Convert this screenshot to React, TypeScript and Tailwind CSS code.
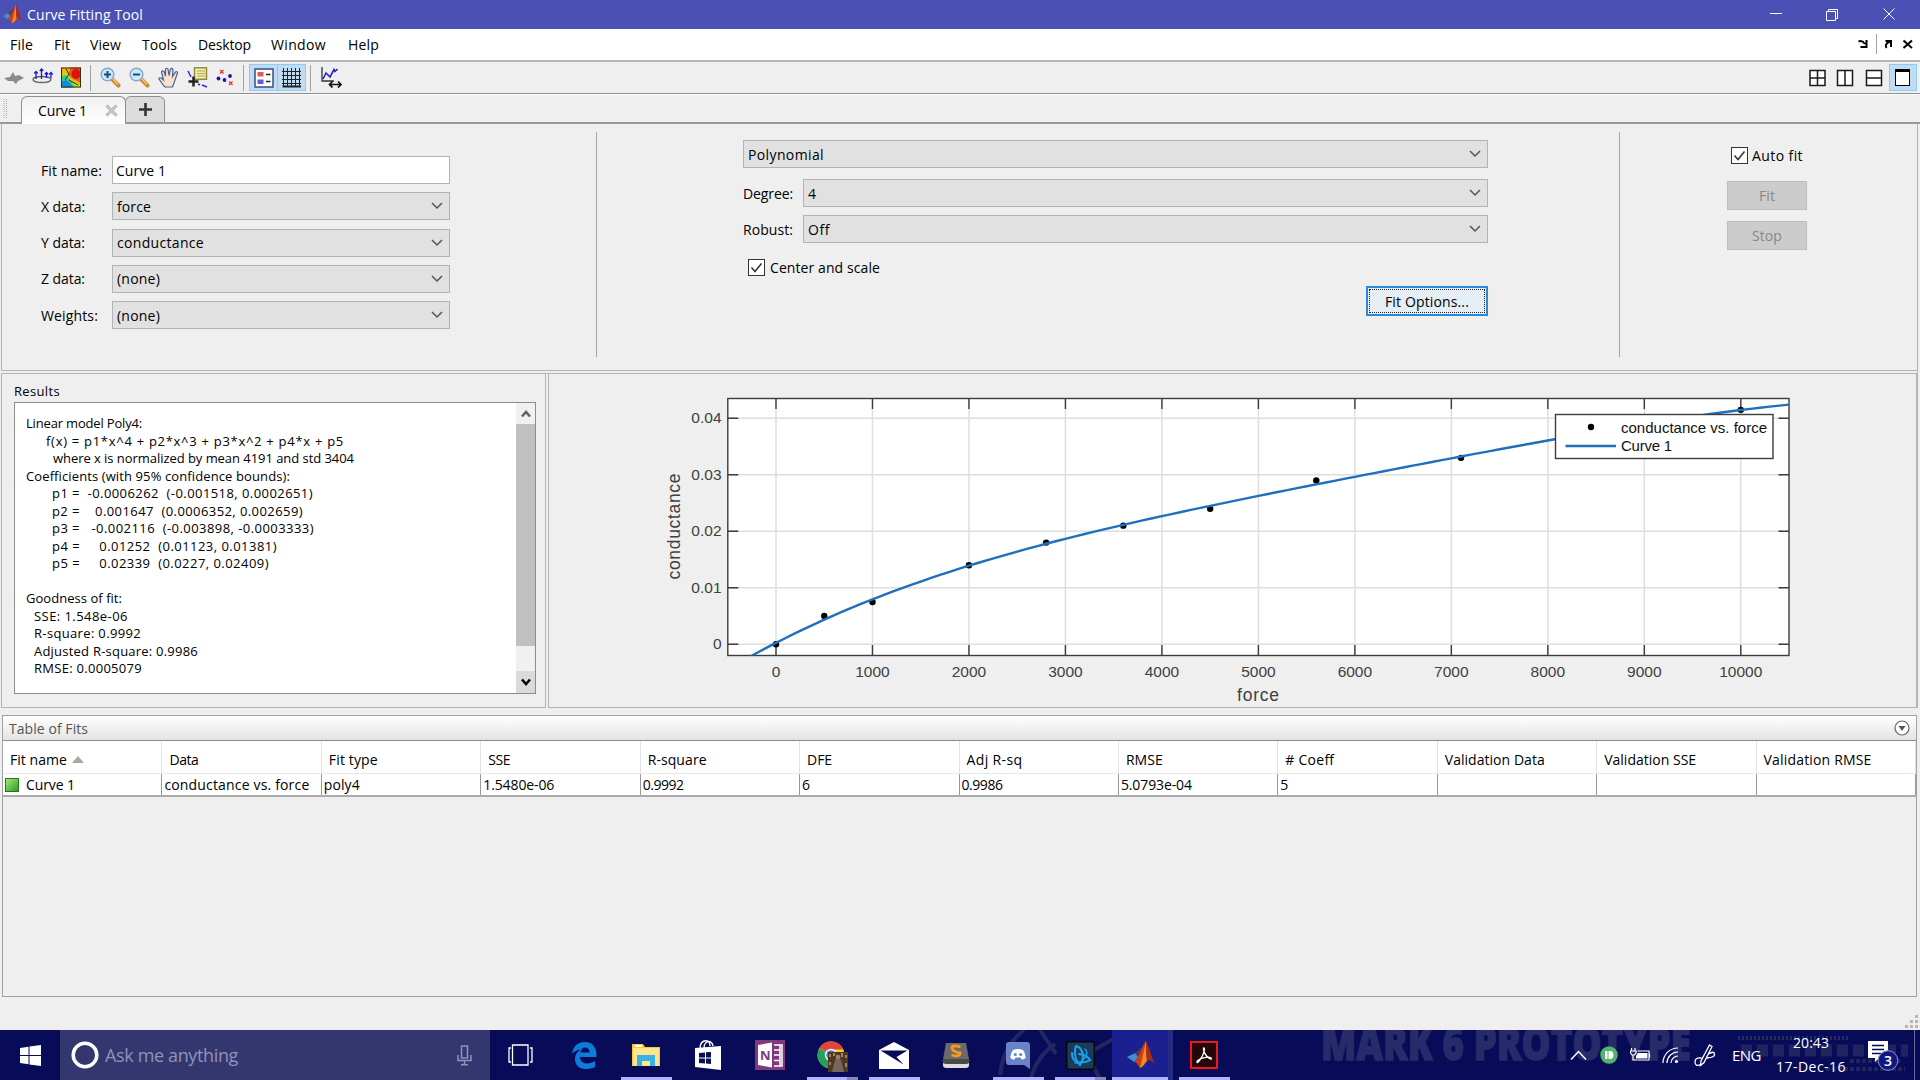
import React, { useLayoutEffect, useRef } from "react";

/* Text run whose tracking is adjusted so that it spans w pixels. */
function T({ w, className = "", children }: { w?: number; className?: string; children: string }) {
  const ref = useRef<HTMLSpanElement>(null);
  useLayoutEffect(() => {
    const el = ref.current;
    if (!el || !w) return;
    el.style.letterSpacing = "0px";
    const natural = el.getBoundingClientRect().width;
    el.style.letterSpacing = `${(w - natural) / children.length}px`;
  }, [w, children]);
  return (
    <span ref={ref} className={`inline-block whitespace-pre ${className}`}>
      {children}
    </span>
  );
}

function MatlabLogo({ size }: { size: number }) {
  return (
    <svg width={size} height={size} viewBox="0 0 30 30">
      <path d="M1 17 L9 13 L13 17 L8 22 Z" fill="#3f8fc9" />
      <path d="M9 13 L14 9 L20 2 L13 18 L8 22 L12 17 Z" fill="#5a3a4a" />
      <path d="M20 1 C17 4 16 11 12 17 C10 20 9 21 8 22 C11 22 12 25 14 28 C18 27 19 22 22 20 Z" fill="#c8421b" />
      <path d="M20 1 C18 10 16 20 14 28 C17 27 19 23 21 21 C20 12 20 8 20 1 Z" fill="#f08a2c" />
      <path d="M20 1 C23 6 25 16 29 24 C26 21 24 19 21 21 C20 14 20 8 20 1 Z" fill="#a82c14" />
    </svg>
  );
}

const MENUS: [string, number, string][] = [
  ["File", 23, "ml-[10px]"],
  ["Fit", 16, "ml-[21px]"],
  ["View", 31, "ml-[20px]"],
  ["Tools", 35, "ml-[21px]"],
  ["Desktop", 53, "ml-[21px]"],
  ["Window", 55, "ml-[20px]"],
  ["Help", 31, "ml-[22px]"],
];

function TitleBar() {
  return (
    <div className="flex h-[29px] items-center bg-[#4a50b4] pl-[2px] text-white">
      <MatlabLogo size={21} />
      <T w={116} className="ml-[4px] text-[14px]">Curve Fitting Tool</T>
      <svg className="mr-[25px] ml-auto" width="125" height="13" viewBox="0 0 125 13" fill="none" stroke="#fff" strokeWidth="1">
        <path d="M0 5.500H12" />
        <path d="M56.500 3.500h9v9h-9zM58.500 3.500v-2h9v9h-2" />
        <path d="M113.500 0.500L124.500 11.500M124.500 0.500L113.500 11.500" />
      </svg>
    </div>
  );
}

function MenuBar() {
  return (
    <div className="flex h-[33px] items-center border-b-2 border-[#b4b4b4] bg-white text-[14px]">
      {MENUS.map(([t, w, m]) => (
        <T key={t} w={w} className={m}>{t}</T>
      ))}
      <svg className="mr-[6px] ml-auto" width="56" height="22" viewBox="0 0 56 22" fill="none" stroke="#000" strokeWidth="2">
        <path d="M0.500 7.500Q4 6 7 10M8.500 6V13H2.500" />
        <path d="M18.500 0V20" stroke="#a0a0a0" strokeWidth="1" />
        <path d="M28.500 14Q26 10 32 7.500M27.500 7H33V13" />
        <path d="M45.500 6.500L54 14M54 6.500L45.500 14" />
      </svg>
    </div>
  );
}

function Sep() {
  return <div className="h-[26px] w-px bg-[#a0a0a0]" />;
}

function Magnifier({ plus }: { plus: boolean }) {
  return (
    <svg width="21" height="21" viewBox="0 0 21 21">
      <path d="M12 12L18.500 18.500" stroke="#c98a2e" strokeWidth="4" strokeLinecap="round" />
      <path d="M12.500 11.500L18 17.500" stroke="#f5c66a" strokeWidth="1.500" />
      <circle cx="7.500" cy="7.500" r="6.300" fill="#c9eaf8" stroke="#8da6cf" strokeWidth="1.500" />
      <path d={plus ? "M4 7.500h7M7.500 4v7" : "M4 7.500h7"} stroke="#1c4a80" strokeWidth="2" />
    </svg>
  );
}

function Toolbar() {
  return (
    <div className="flex h-[32px] items-center border-b border-[#8c8c8c]">
      <svg className="ml-[4px]" width="20" height="21" viewBox="0 0 20 21">
        <path d="M0 11L6 10L9 5L11 9L15 8L20 11L14 14L12 17L9 14L4 14Z" fill="#8a8a8a" />
      </svg>
      <svg className="ml-[8px]" width="21" height="21" viewBox="0 0 21 21" fill="none">
        <ellipse cx="10" cy="12.500" rx="9" ry="3" stroke="#666" strokeWidth="1.300" />
        <path d="M4 12V5M9.500 12V3M14.500 11V6M19 11V6" stroke="#1717d8" strokeWidth="1.300" />
        <path d="M2.300 6.500L4 4.500L5.700 6.500M7.800 4L9.500 2L11.200 4M12.800 7.500l1.700-2l1.700 2M17.300 7.500l1.700-2l1.700 2" stroke="#1717d8" strokeWidth="1.300" />
      </svg>
      <svg className="ml-[8px]" width="20" height="21" viewBox="0 0 20 21">
        <rect width="20" height="20" y=".5" fill="#fbb11a" />
        <path d="M9 1Q9 5 6 8L12 12L20 16V.5H10Z" fill="#ef5a12" />
        <ellipse cx="15" cy="7" rx="4.500" ry="5" fill="#e01111" />
        <path d="M0 9Q4 3 7 7L12 14L20 18V20.500H0Z" fill="#b5e02a" />
        <path d="M0 11Q4 5 8 11L14 20.500H0Z" fill="#35c98a" />
        <path d="M0 16Q5 9 12 20.500H0Z" fill="#1986dc" />
        <path d="M5 2L8 7L4 13M8 13L17 18" fill="none" stroke="#3b2b12" />
        <rect x=".5" y="1" width="19" height="19" fill="none" stroke="#3a2a10" />
      </svg>
      <div className="ml-[9px]"><Sep /></div>
      <div className="ml-[9px] flex gap-[8px]">
        <Magnifier plus />
        <Magnifier plus={false} />
        <svg width="21" height="21" viewBox="0 0 21 21">
          <path d="M6 19L1 12Q1 10 4 11.500L5.500 13L3.500 5Q4 3 6 4.500L7.500 9L7.500 2Q9 .5 10 2L11 8.500L12.500 2Q14 .5 15 2.500L14.500 9.500L17.500 5Q19.500 4 19.500 6L16 16L14.500 20H7Z" fill="#fbe0cd" stroke="#46648f" strokeWidth="1.200" />
        </svg>
        <svg width="21" height="21" viewBox="0 0 21 21" fill="none">
          <path d="M1 4L4 10M11 17L13 18M15 18L20 20" stroke="#2a2af0" strokeWidth="1.500" />
          <rect x="7.500" y=".8" width="12" height="11.500" fill="#f5f0a0" stroke="#8d8a4a" strokeWidth="1.500" />
          <path d="M10 4h8M10 6.500h8M10 9h8" stroke="#a9a564" />
          <path d="M1.500 14.500h10M6.500 9.500v10" stroke="#222" strokeWidth="2.500" />
        </svg>
        <svg width="21" height="21" viewBox="0 0 21 21" fill="none">
          <g fill="#1616b4"><circle cx="2.500" cy="11.500" r="1.900" /><circle cx="8.500" cy="13" r="1.900" /><circle cx="14" cy="9" r="1.900" /></g>
          <path d="M4 3l3.500 3.500M7.500 3L4 6.500M13 14.500l3.500 3.500M16.500 14.500L13 18" stroke="#e33" strokeWidth="1.300" />
        </svg>
      </div>
      <div className="ml-[6px]"><Sep /></div>
      <div className="ml-[5px] flex">
        <div className="flex h-[27px] w-[29px] items-center justify-center border border-[#90c8f6] bg-[#c0dcf3]">
          <svg width="20" height="20" viewBox="0 0 20 20" fill="none">
            <rect x="1" y="1" width="18" height="18" fill="#fff" stroke="#3c4c7c" strokeWidth="1.500" />
            <rect x="3.500" y="4" width="6" height="4.500" fill="#e2575a" />
            <rect x="3.500" y="11.500" width="6" height="4.500" fill="#5b5be0" />
            <path d="M12 6.500h4.500M12 13.500h4.500" stroke="#222" strokeWidth="1.500" />
          </svg>
        </div>
        <div className="flex h-[27px] w-[28px] items-center justify-center border border-l-0 border-[#90c8f6] bg-[#c0dcf3]">
          <svg width="20" height="20" viewBox="0 0 20 20" fill="none" stroke="#222">
            <path d="M1.500 0V19M5.500 0V19M9.500 0V19M13.500 0V19M17.500 0V19M0 3.500H19M0 7.500H19M0 11.500H19M0 15.500H19" />
            <path d="M0.500 18.500H19" strokeWidth="2" />
          </svg>
        </div>
      </div>
      <div className="ml-[4px]"><Sep /></div>
      <svg className="ml-[10px]" width="21" height="21" viewBox="0 0 21 21" fill="none">
        <path d="M1 0V14H13" stroke="#333" strokeWidth="1.300" />
        <path d="M2 12L5 6L9 10L13 2.500L14 4.500L16.500 2" stroke="#2222c8" strokeWidth="1.600" />
        <path d="M9 17.500h10M11.500 14.500L8.500 17.500L11.500 20.500M17 14.500L20 17.500L17 20.500" stroke="#111" strokeWidth="1.700" />
      </svg>
      <svg className="mr-[6px] ml-auto" width="74" height="18" viewBox="0 0 74 18" fill="#fff" stroke="#1a1a1a" strokeWidth="1.500">
        <path d="M1 1.500h15v15H1zM8.500 1.500v15M1 9h15" />
        <path d="M28.500 1.500h15v15h-15zM36 1.500v15" />
        <path d="M57.500 1.500h15v15h-15zM57.500 9h15" />
      </svg>
      <div className="mr-[3px] flex h-[27px] w-[28px] items-center justify-center border border-[#90c8f6] bg-[#c0dcf3]">
        <div className="mr-px h-[17px] w-[15px] border border-t-[3px] border-black bg-white" />
      </div>
    </div>
  );
}

function Tabs() {
  return (
    <div className="flex h-[30px] items-end border-t border-b-2 border-t-white border-b-[#989898]">
      <svg className="mb-[4px] ml-[3px]" width="5" height="19" viewBox="0 0 5 19">
        <path d="M1 0V19M3.500 0V19" stroke="#a8a8a8" strokeDasharray="1 1" />
      </svg>
      <div className="-mb-[2px] ml-[13px] flex h-[28px] w-[105px] items-center rounded-t-[6px] border border-b-0 border-[#909090] bg-gradient-to-b from-[#f0f0f0] to-white pb-px">
        <T w={49} className="ml-[16px] text-[14px]">Curve 1</T>
        <svg className="ml-[18px]" width="13" height="13" viewBox="0 0 13 13" fill="none">
          <path d="M1.500 1.500L11.500 11.500M11.500 1.500L1.500 11.500" stroke="#b4b4b4" strokeWidth="3" />
          <path d="M2.500 2.500L10.500 10.500M10.500 2.500L2.500 10.500" stroke="#d8d8d8" strokeWidth="1" />
        </svg>
      </div>
      <div className="-ml-px flex h-[26px] w-[40px] items-center justify-center rounded-t-[6px] border border-b-0 border-[#909090] bg-[#dcdcdc]">
        <svg width="13" height="13" viewBox="0 0 13 13"><path d="M0 6.500h13M6.500 0v13" stroke="#333" strokeWidth="2.600" /></svg>
      </div>
    </div>
  );
}

function Combo({ value, vw, className = "" }: { value: string; vw: number; className?: string }) {
  return (
    <div className={`flex h-[28px] items-center border border-[#b2b3b8] bg-[#e1e1e1] pr-[6px] pl-[4px] ${className}`}>
      <T w={vw}>{value}</T>
      <svg className="ml-auto" width="12" height="8" viewBox="0 0 12 8" fill="none" stroke="#555" strokeWidth="1.500"><path d="M1 1L6 6L11 1" /></svg>
    </div>
  );
}

function Check() {
  return (
    <div className="flex h-[17px] w-[17px] items-center justify-center border border-[#333] bg-white">
      <svg width="13" height="13" viewBox="0 0 13 13" fill="none" stroke="#333" strokeWidth="1.500"><path d="M1.500 6.500L5 10.500L11.500 2.500" /></svg>
    </div>
  );
}

const FIELDS: [string, number, string, number][] = [
  ["X data:", 44, "force", 34],
  ["Y data:", 44, "conductance", 87],
  ["Z data:", 44, "(none)", 43],
  ["Weights:", 57, "(none)", 43],
];

function SettingsPanel() {
  return (
    <div className="flex h-[247px] border-b border-l border-[#b4b4b4] pt-[8px] text-[14px]">
      <div className="mt-[24px] flex w-[594px] flex-col gap-[8.300px] pl-[39px]">
        <div className="flex items-center">
          <div className="w-[71px]"><T w={61}>Fit name:</T></div>
          <div className="flex h-[28px] w-[338px] items-center border border-[#b2b3b8] bg-white pl-[3px]"><T w={50}>Curve 1</T></div>
        </div>
        {FIELDS.map(([l, lw, v, vw]) => (
          <div key={l} className="flex items-center">
            <div className="w-[71px]"><T w={lw}>{l}</T></div>
            <Combo value={v} vw={vw} className="w-[338px]" />
          </div>
        ))}
      </div>
      <div className="h-[225px] w-px bg-[#a6a6a6]" />
      <div className="ml-[146px] w-[745px] pt-[8px]">
        <Combo value="Polynomial" vw={76} />
        <div className="mt-[11px] flex items-center"><div className="w-[60px]"><T w={50}>Degree:</T></div><Combo value="4" vw={8} className="flex-1" /></div>
        <div className="mt-[8px] flex items-center"><div className="w-[60px]"><T w={50}>Robust:</T></div><Combo value="Off" vw={22} className="flex-1" /></div>
        <div className="mt-[14px] ml-[5px] flex items-center gap-[5px]"><Check /><T w={110}>Center and scale</T></div>
        <div className="mt-[8px] ml-auto h-[30px] w-[122px] border-2 border-[#2a8ad8] bg-[#e5edf5] p-px">
          <div className="flex h-full items-center justify-center border border-dotted border-[#222]"><T w={84}>Fit Options...</T></div>
        </div>
      </div>
      <div className="ml-[131px] h-[225px] w-px bg-[#a6a6a6]" />
      <div className="ml-[107px] pt-[13px]">
        <div className="ml-[4px] flex items-center gap-[4px]"><Check /><T w={51}>Auto fit</T></div>
        <div className="mt-[15px] flex h-[29px] w-[80px] items-center justify-center border border-[#bfbfbf] bg-[#cccccc] text-[#888]"><T w={16}>Fit</T></div>
        <div className="mt-[11px] flex h-[29px] w-[80px] items-center justify-center border border-[#bfbfbf] bg-[#cccccc] text-[#888]"><T w={30}>Stop</T></div>
      </div>
    </div>
  );
}

/* text, indent in px, width in px */
const RESULTS: [string, number, number][] = [
  ["Linear model Poly4:", 0, 116],
  ["f(x) = p1*x^4 + p2*x^3 + p3*x^2 + p4*x + p5", 20, 298],
  ["where x is normalized by mean 4191 and std 3404", 27, 301],
  ["Coefficients (with 95% confidence bounds):", 0, 264],
  ["p1 =  -0.0006262  (-0.001518, 0.0002651)", 26, 261],
  ["p2 =    0.001647  (0.0006352, 0.002659)", 26, 251],
  ["p3 =   -0.002116  (-0.003898, -0.0003333)", 26, 262],
  ["p4 =     0.01252  (0.01123, 0.01381)", 26, 225],
  ["p5 =     0.02339  (0.0227, 0.02409)", 26, 217],
  [" ", 0, 4],
  ["Goodness of fit:", 0, 96],
  ["SSE: 1.548e-06", 8, 94],
  ["R-square: 0.9992", 8, 107],
  ["Adjusted R-square: 0.9986", 8, 164],
  ["RMSE: 0.0005079", 8, 108],
];

function Results() {
  return (
    <div className="h-full w-[545px] border-r border-b border-l border-[#b4b4b4] pt-[8px] pl-[12px]">
      <div className="flex h-[20px] items-center text-[13px]"><T w={46}>Results</T></div>
      <div className="flex h-[292px] w-[522px] border border-[#8a8c90] bg-white">
        <div className="flex-1 pt-[12px] pl-[11px] text-[13px] leading-[17.500px] text-black">
          {RESULTS.map(([t, indent, w], i) => (
            <div key={i} className="h-[17.500px]" style={{ paddingLeft: indent }}><T w={w}>{t}</T></div>
          ))}
        </div>
        <div className="flex w-[19px] flex-col bg-[#f0f0f0]">
          <div className="flex h-[21px] items-center justify-center">
            <svg width="10" height="8" viewBox="0 0 10 8" fill="none" stroke="#606060" strokeWidth="2.500"><path d="M1 6.500L5 2L9 6.500" /></svg>
          </div>
          <div className="h-[222px] bg-[#c0c0c0]" />
          <div className="mt-auto flex h-[22px] items-center justify-center bg-[#dadada]">
            <svg width="10" height="8" viewBox="0 0 10 8" fill="none" stroke="#000" strokeWidth="2.500"><path d="M1 1.500L5 6L9 1.500" /></svg>
          </div>
        </div>
      </div>
    </div>
  );
}

/* Plot geometry, in pixels inside the chart panel. */
const px = (x: number) => 227 + (x / 1000) * 96.48;
const py = (y: number) => 270.3 - (y / 0.01) * 56.5;
const model = (x: number) => {
  const z = (x - 4191) / 3404;
  return -0.0006262 * z ** 4 + 0.001647 * z ** 3 - 0.002116 * z ** 2 + 0.01252 * z + 0.02339;
};
const CURVE = Array.from({ length: 111 }, (_, i) => -500 + i * 100)
  .map((x, i) => `${i ? "L" : "M"}${px(x).toFixed(2)} ${py(model(x)).toFixed(2)}`)
  .join("");
const POINTS: [number, number][] = [
  [0, 0], [500, 0.005], [1000, 0.0075], [2000, 0.014], [2800, 0.018], [3600, 0.021],
  [4500, 0.024], [5600, 0.029], [7100, 0.033], [10000, 0.0415],
];
const XT = [0, 1000, 2000, 3000, 4000, 5000, 6000, 7000, 8000, 9000, 10000];
const YT = [0, 0.01, 0.02, 0.03, 0.04];

function Chart() {
  const L = 178.8, R = 1240, TP = 24.5, B = 281.5;
  return (
    <div className="h-full flex-1 border-r border-b border-l border-[#b4b4b4]">
      <svg width="1366" height="332" viewBox="0 0 1366 332" fontFamily="'Liberation Sans', Arial, sans-serif">
        <defs><clipPath id="axes"><rect x={L} y={TP} width={R - L} height={B - TP} /></clipPath></defs>
        <rect x={L} y={TP} width={R - L} height={B - TP} fill="#fff" />
        {XT.map((x) => <path key={x} d={`M${px(x)} ${TP}V${B}`} stroke="#dedede" strokeWidth="1.500" />)}
        {YT.map((y) => <path key={y} d={`M${L} ${py(y)}H${R}`} stroke="#dedede" strokeWidth="1.500" />)}
        {XT.map((x) => <path key={x} d={`M${px(x)} ${TP}v10.500M${px(x)} ${B}v-10.500`} stroke="#3c3c3c" strokeWidth="1.400" />)}
        {YT.map((y) => <path key={y} d={`M${L} ${py(y)}h10.500M${R} ${py(y)}h-10.500`} stroke="#3c3c3c" strokeWidth="1.400" />)}
        <rect x={L} y={TP} width={R - L} height={B - TP} fill="none" stroke="#3c3c3c" strokeWidth="1.400" />
        {POINTS.map(([x, y]) => <circle key={x} cx={px(x)} cy={py(y)} r="3.200" fill="#000" />)}
        <path d={CURVE} fill="none" stroke="#1f6fbd" strokeWidth="2.400" clipPath="url(#axes)" />
        <g fontSize="15.500" fill="#404040">
          {XT.map((x) => <text key={x} x={px(x)} y="303" textAnchor="middle">{x}</text>)}
          {YT.map((y) => <text key={y} x="172.500" y={py(y) + 5} textAnchor="end">{y}</text>)}
          <text x="709" y="327" fontSize="17.500" textAnchor="middle" textLength="42">force</text>
          <text transform="translate(131 152.500) rotate(-90)" fontSize="17.500" textAnchor="middle" textLength="106">conductance</text>
        </g>
        <rect x="1006.500" y="40.500" width="217.500" height="44" fill="#fff" stroke="#3c3c3c" strokeWidth="1.400" />
        <circle cx="1042" cy="53" r="3.200" fill="#000" />
        <path d="M1016.500 72H1067" stroke="#1f6fbd" strokeWidth="2.400" />
        <g fontSize="15" fill="#111">
          <text x="1072" y="58.500" textLength="146">conductance vs. force</text>
          <text x="1072" y="77" textLength="51">Curve 1</text>
        </g>
      </svg>
    </div>
  );
}

const COLS: [string, number, string, number][] = [
  ["Fit name", 57, "Curve 1", 49],
  ["Data", 29, "conductance vs. force", 145],
  ["Fit type", 49, "poly4", 36],
  ["SSE", 22, "1.5480e-06", 71],
  ["R-square", 59, "0.9992", 41],
  ["DFE", 25, "6", 8],
  ["Adj R-sq", 56, "0.9986", 41],
  ["RMSE", 37, "5.0793e-04", 71],
  ["# Coeff", 49, "5", 8],
  ["Validation Data", 100, "", 0],
  ["Validation SSE", 92, "", 0],
  ["Validation RMSE", 108, "", 0],
];

function FitsTable() {
  return (
    <div className="mr-[3px] ml-[2px] mt-[7px] flex h-[282px] flex-col border border-[#a0a2a8] text-[14px]">
      <div className="flex h-[25px] items-center border-b border-[#8a8c92] bg-gradient-to-b from-white to-[#e4e4e4] pr-[6px] pl-[6px] text-[#555]">
        <T w={79}>Table of Fits</T>
        <svg className="ml-auto" width="16" height="16" viewBox="0 0 16 16">
          <circle cx="8" cy="8" r="7" fill="#fff" stroke="#666" strokeWidth="1.200" />
          <path d="M4.500 6h7L8 11Z" fill="#555" />
        </svg>
      </div>
      <div className="grid h-[33px] grid-cols-12 border-b border-[#e8e8e8] bg-white">
        {COLS.map(([h, w], i) => (
          <div key={h} className="flex items-center border-r border-[#e2e2e2] pt-[4px] pl-[7px]">
            <T w={w}>{h}</T>
            {i === 0 && <svg className="ml-[5px]" width="12" height="7" viewBox="0 0 12 7"><path d="M0 7L6 0L12 7Z" fill="#aaa99c" /></svg>}
          </div>
        ))}
      </div>
      <div className="grid h-[23px] grid-cols-12 border-b-2 border-[#ababab] bg-white">
        {COLS.map(([h, , v, w], i) => (
          <div key={h} className="flex items-center border-r border-[#9a9a9a] pl-[2px]">
            {i === 0 && <div className="mr-[7px] h-[14px] w-[14px] border border-[#26761a] bg-gradient-to-br from-[#a4e878] to-[#2c9a1c]" />}
            {v ? <T w={w}>{v}</T> : null}
          </div>
        ))}
      </div>
    </div>
  );
}

function Slot({ bar, split, active, children }: { bar?: boolean; split?: boolean; active?: boolean; children: React.ReactNode }) {
  return (
    <div className="flex h-[50px] w-[62px] justify-center">
      <div className={`flex flex-col items-center ${active ? "w-[61px] border-r-[5px] border-[#252b84] bg-[#1a2090]" : "w-[51px]"}`}>
        <div className="flex h-[47px] items-center justify-center pt-[3px]">{children}</div>
        {bar && (
          <div className="flex h-[3px] w-full bg-[#b2b4fb]">
            {split && <div className="ml-auto h-full w-[11px] bg-[#8587bd]" />}
          </div>
        )}
      </div>
    </div>
  );
}

function Taskbar() {
  return (
    <div className="relative flex h-[50px] items-center overflow-hidden bg-[#080b58] text-white">
      {/* Wallpaper art showing through the translucent bar */}
      <svg className="pointer-events-none absolute inset-0" width="1920" height="50" viewBox="0 0 1920 50">
        <g fill="none" stroke="#222662" strokeWidth="4">
          <path d="M1000 45A65 65 0 0 1 1024 0M1031 48A60 60 0 0 1 1055 14M1040 0L1056 24M1094 20Q1120 5 1128 0M1100 50A60 60 0 0 0 1090 32" />
        </g>
        <g transform="translate(1321 30) scale(0.79 1)">
          <text fontFamily="'Open Sans', sans-serif" fontWeight="800" fontSize="46" fill="#272b69" stroke="#272b69" strokeWidth="1.500" textLength="468">MARK 6 PROTOTYPE</text>
        </g>
        <path d="M1741 20.500H1908" stroke="#20255f" strokeWidth="12" strokeDasharray="11 5" />
        <path d="M1738 8H1848" stroke="#252964" strokeWidth="4" strokeDasharray="2 2" />
        <path d="M1850 31H1900M1826 39H1905" stroke="#20255f" strokeWidth="4" strokeDasharray="4 2" />
        <path d="M1914.500 0V50" stroke="#6a6d9c" />
      </svg>
      <div className="flex w-[60px] justify-center">
        <svg width="21" height="21" viewBox="0 0 21 21" fill="#fff"><path d="M0 3L8.500 1.800V10H0ZM9.500 1.600L21 0V10H9.500ZM0 11H8.500V19.200L0 18ZM9.500 11H21V21L9.500 19.400Z" /></svg>
      </div>
      <div className="z-10 flex h-[50px] w-[430px] items-center bg-[#33366f] pl-[11px] text-[#9092b8]">
        <svg width="28" height="28" viewBox="0 0 28 28"><circle cx="14" cy="14" r="11.800" fill="none" stroke="#fff" strokeWidth="3.500" /></svg>
        <T w={133} className="ml-[6px] text-[18px]">Ask me anything</T>
        <svg className="mr-[18px] ml-auto" width="15" height="21" viewBox="0 0 15 21" fill="none" stroke="#9092b8" strokeWidth="1.500"><path d="M4.500 1h6v12h-6zM1 10v5.500h13V10M7.500 15.500V20M4 19.700h7" /></svg>
      </div>
      <div className="relative ml-px flex">
        <Slot><svg className="mr-[4px]" width="25" height="23" viewBox="0 0 25 23" fill="none" stroke="#fff" strokeWidth="1.300"><path d="M4.500 1h15.500v20H4.500zM3 4H1v14h2M22 4h2v14h-2" /></svg></Slot>
        <Slot>
          <svg width="25" height="27" viewBox="0 0 25 27" fill="#0b7cd8">
            <path d="M0 12C1 4 6 0 13 0C21 0 25 6 24.500 15H8C8 19 11 21.500 15 21.500C18 21.500 20.500 20.500 23 19V25C20 26.500 17 27 14 27C7 27 3 23 3 17C3 13 5 9.500 9 7.500C5 8 2 9.500 0 12ZM8.500 10.500H17.500C17.500 7.500 16 5.500 13 5.500C10.500 5.500 9 7.500 8.500 10.500Z" fillRule="evenodd" />
          </svg>
        </Slot>
        <Slot bar>
          <svg width="28" height="24" viewBox="0 0 28 24">
            <path d="M0 1h11l2 3h15v19H0Z" fill="#f9c83a" /><path d="M3 2h7v2H3z" fill="#fff" /><path d="M1 5h26v18H1z" fill="#fde48e" />
            <path d="M5 12h18v11h-5v-5h-8v5H5z" fill="#36b4ea" />
          </svg>
        </Slot>
        <Slot>
          <svg width="27" height="30" viewBox="0 0 27 30">
            <path d="M5 9C5 2 8 .7 11 .7S15 4 15 6M9 8C9 3 12 1.500 14 1.500S18 4 18 6" fill="none" stroke="#fff" strokeWidth="1.400" />
            <path d="M0 8L26 6V30L0 27Z" fill="#fff" />
            <path d="M4 13l6-.5v5H4zM11 12.300l5-.4v5.600h-5zM4 18.500h6v5l-6-.6zM11 18.500h5v5.600l-5-.5z" fill="#0a0e58" />
          </svg>
        </Slot>
        <Slot>
          <svg width="30" height="30" viewBox="0 0 30 30">
            <rect width="30" height="30" fill="#80397b" /><path d="M3 5L17 2.500V27.500L3 25Z" fill="#fff" />
            <path d="M19 5h8v21h-8M19 10h6M19 15h6M19 20.500h6M25 5v21" stroke="#fff" strokeWidth="1.500" fill="none" />
            <text x="5" y="20" fontFamily="'Open Sans', sans-serif" fontWeight="700" fontSize="13" fill="#80397b">N</text>
          </svg>
        </Slot>
        <Slot bar split>
          <svg className="mt-[2px]" width="31" height="31" viewBox="0 0 31 31">
            <circle cx="14" cy="14" r="13.500" fill="#f7c92f" />
            <path d="M14 14L2.500 7A13.500 13.500 0 0 1 26.500 8.500H14Z" fill="#e0453a" />
            <path d="M14 14L2.300 7.200A13.500 13.500 0 0 0 12 27.300L17 17Z" fill="#23a05a" />
            <circle cx="14" cy="14" r="6.200" fill="#fff" /><circle cx="14" cy="14" r="4.800" fill="#4583ef" />
            <rect x="11" y="11" width="20" height="20" fill="#4c3924" />
            <path d="M13 13v3M17 12v3M25 12v4M29 14v3M13 21v3M29 22v4" stroke="#a5824c" strokeWidth="2" />
            <path d="M15 31L18 19Q21 14 24 19L27 31Z" fill="#75675c" /><circle cx="21" cy="16" r="2.300" fill="#a08468" />
          </svg>
        </Slot>
        <Slot bar>
          <svg width="30" height="28" viewBox="0 0 30 28"><path d="M0 9L15 1L30 9V28H0Z" fill="#fff" /><path d="M1.500 9.500H28.500L17.500 16L24.500 23.500Z" fill="#080b58" /></svg>
        </Slot>
        <Slot>
          <svg width="28" height="26" viewBox="0 0 28 26">
            <path d="M1 19H27V23Q27 26 24 26H4Q1 26 1 23Z" fill="#ddd" />
            <path d="M4 1H24L27.500 19Q27.500 22 24 22H4Q.5 22 .5 19Z" fill="#4a4a4a" /><path d="M4 1H24L26.500 17H1.500Z" fill="#6a6a6a" />
            <path d="M18.500 5Q10 2.500 10 6T18 11Q18 15.500 9.500 13" fill="none" stroke="#f99a1e" strokeWidth="2.800" />
          </svg>
        </Slot>
        <Slot bar>
          <svg width="24" height="27" viewBox="0 0 24 27">
            <path d="M3 0H21Q24 0 24 3V27L18 23H3Q0 23 0 20V3Q0 0 3 0Z" fill="#6a83c8" />
            <path d="M7 8Q12 6 17 8Q20 12 19.500 16Q17 18 15.500 17.500L14.500 15.500H9.500L8.500 17.500Q7 18 4.500 16Q4 12 7 8Z" fill="#fff" />
            <circle cx="9.300" cy="12.500" r="1.600" fill="#6a83c8" /><circle cx="14.700" cy="12.500" r="1.600" fill="#6a83c8" />
          </svg>
        </Slot>
        <Slot bar split>
          <svg width="29" height="29" viewBox="0 0 29 29">
            <rect x=".7" y=".7" width="27.600" height="27.600" rx="2" fill="#1d3a5c" stroke="#05070f" strokeWidth="1.500" />
            <g fill="none" stroke="#14a5ee" strokeWidth="2" strokeLinecap="round">
              <path d="M10 5Q16 6 17 15Q17 20 14 24Q9 20 9 11Q9 7 10 5" />
              <path d="M6 12Q6 20 12 21M13 13Q21 14 24 19Q20 22 15 21" />
              <path d="M19 8Q22 11 20 15Q16 22 9 22" strokeWidth="1.400" />
            </g>
          </svg>
        </Slot>
        <Slot bar active><div className="ml-[3px]"><MatlabLogo size={30} /></div></Slot>
        <Slot bar>
          <svg width="28" height="28" viewBox="0 0 28 28">
            <rect x="1" y="1" width="26" height="26" fill="#25070a" stroke="#f01a10" strokeWidth="2" />
            <path d="M7 21C6 18 20 14 21.500 17.500C21 20 13 13 13.500 7C15.500 6 14.500 13 9.500 19.500C8 21.500 7 22 7 21Z" fill="none" stroke="#fff" strokeWidth="1.300" />
          </svg>
        </Slot>
      </div>
      <div className="relative mr-[21px] ml-auto flex h-[50px] items-center">
        <svg width="17" height="11" viewBox="0 0 17 11" fill="none" stroke="#fff" strokeWidth="1.500"><path d="M1 9.500L8.500 1.500L16 9.500" /></svg>
        <svg className="ml-[13px]" width="18" height="18" viewBox="0 0 18 18"><circle cx="9" cy="9" r="8.700" fill="#52b36a" /><path d="M5 5h2.500v8H5zM8.500 5H10Q13.500 5 13.500 9T10 13H8.500Z" fill="#fff" /></svg>
        <svg className="ml-[12px]" width="21" height="16" viewBox="0 0 21 16" fill="none" stroke="#fff"><path d="M1.500 1v3M5 1v3M.5 4h5.500v2l-1.500 2H2L.5 6zM3 8v5h4M7.500 4H19v9H7.500M19.500 6.500v4" strokeWidth="1.200" /><path d="M8 6h9.500v5.500H6V9Z" fill="#fff" stroke="none" /></svg>
        <svg className="ml-[11px]" width="17" height="17" viewBox="0 0 17 17" fill="none" stroke="#fff" strokeWidth="1.200"><path d="M1 16A15 15 0 0 1 16 1M5 16A11 11 0 0 1 16 5M9 16A7 7 0 0 1 16 9" /><circle cx="14.500" cy="14.500" r="1.600" fill="#fff" stroke="none" /></svg>
        <svg className="ml-[15px]" width="22" height="23" viewBox="0 0 22 23" fill="none" stroke="#fff" strokeWidth="1.300"><path d="M15.500 1L18 2.500L10 18.500L6.500 21.500L7 17ZM7.500 14Q1 13 1 18T6.500 20.500M14.500 10Q20 6.500 20.500 10T13 14" /></svg>
        <T w={29} className="ml-[16px] text-[15px]">ENG</T>
        <div className="ml-[15px] flex w-[70px] flex-col items-center text-[14px] leading-[24px]">
          <T w={36}>20:43</T>
          <T w={70}>17-Dec-16</T>
        </div>
        <svg className="ml-[22px]" width="31" height="34" viewBox="0 0 31 34">
          <path d="M0 3H20V20H11L7 24V20H0Z" fill="#fff" /><path d="M4 7.500h12M4 11.500h12M4 15.500h9" stroke="#080b58" strokeWidth="1.300" />
          <circle cx="20" cy="22.500" r="9.800" fill="#11197f" stroke="#8e93cc" />
          <text x="20" y="27.500" textAnchor="middle" fontFamily="'Open Sans', sans-serif" fontSize="14" fontWeight="600" fill="#fff">3</text>
        </svg>
      </div>
    </div>
  );
}

export default function App() {
  return (
    <div className="flex h-[1080px] w-[1920px] flex-col overflow-hidden bg-[#efefef] font-['Open_Sans',sans-serif] text-black">
      <TitleBar />
      <MenuBar />
      <Toolbar />
      <Tabs />
      <div className="mr-[2px] ml-px flex flex-col border-r border-[#b4b4b4]">
        <SettingsPanel />
        <div className="mt-[2px] flex h-[335px] gap-[2px] border-t border-[#b4b4b4]">
          <Results />
          <Chart />
        </div>
      </div>
      <FitsTable />
      <div className="flex flex-1 items-end justify-end pr-[2px] pb-[2px]">
        <svg width="13" height="13" viewBox="0 0 13 13" fill="#b9b7a6"><path d="M0 10h3v3H0zM5 10h3v3H5zM10 10h3v3h-3zM5 5h3v3H5zM10 5h3v3h-3zM10 0h3v3h-3z" /></svg>
      </div>
      <Taskbar />
    </div>
  );
}
